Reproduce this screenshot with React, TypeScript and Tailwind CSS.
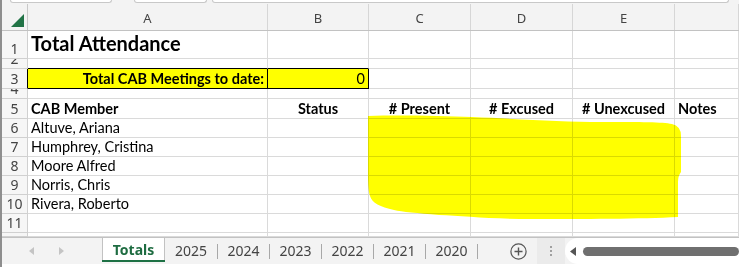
import React from 'react';

type CellSpec = { text?: string; cls?: string };

const COLS = ['w-[240px]', 'w-[101px]', 'w-[102px]', 'w-[102px]', 'w-[102px]', 'flex-1'];
const COL_LETTERS = ['A', 'B', 'C', 'D', 'E', ''];

const cellFont = "font-['Lato','Liberation_Sans',sans-serif] text-black";
const uiFont = "font-['Noto_Sans','Liberation_Sans',sans-serif]";

function SheetRow({
  num,
  h,
  cells,
  hdrCls
}: {
  num: string;
  h: string;
  cells?: (CellSpec | undefined)[];
  hdrCls?: string;
}) {
  return (
    <div className={`flex ${h}`}>
      <div
        className={`w-[26px] shrink-0 flex items-end justify-center overflow-hidden bg-[#f6f6f6] border-r border-b border-[#d0d0d0] text-[#444] text-[14px] leading-[16px] pb-[1px] ${uiFont} ${hdrCls ?? ''}`}
      >
        {num}
      </div>
      {COLS.map((w, i) => {
        const c = cells?.[i];
        return (
          <div
            key={i}
            className={`${w} shrink-0 flex items-end overflow-hidden whitespace-nowrap border-r border-b border-[#dadada] px-[3px] pb-[1px] text-[14.5px] leading-[17px] ${cellFont} ${c?.cls ?? ''}`}
          >
            {c?.text}
          </div>
        );
      })}
    </div>
  );
}

function Highlight() {
  return (
    <svg
      className="absolute left-0 top-0 pointer-events-none mix-blend-multiply"
      width="739"
      height="267"
      viewBox="0 0 739 267"
    >
      <path
        d="M366,116 C400,115 440,116 470,117 C520,119 560,122 600,122 C640,122 660,122 670,124 Q679,126 679,136 L679,172 Q676,176 676,182 L676,217 C640,219 580,219 530,219 C490,219 460,216 437,215 C415,213 400,212 392,210 C378,207 370,203 368,196 C366,190 366,180 366,170 Z"
        fill="#ffff00"
      />
    </svg>
  );
}

function TabBar() {
  const years = ['2025', '2024', '2023', '2022', '2021', '2020'];
  return (
    <div className={`flex h-[27px] border-t border-[#c2c2c2] bg-[#f3f3f3] ${uiFont}`}>
      <div className="w-[100px] shrink-0 flex items-center">
        <svg width="6" height="8" viewBox="0 0 6 8" className="ml-[27px]">
          <path d="M5,0 L0,4 L5,8 Z" fill="#c4c4c4" />
        </svg>
        <svg width="6" height="8" viewBox="0 0 6 8" className="ml-[23px]">
          <path d="M1,0 L6,4 L1,8 Z" fill="#c4c4c4" />
        </svg>
      </div>
      <div className="w-[63px] shrink-0 flex flex-col">
        <div className="h-[22px] bg-white border-x border-[#c2c2c2] flex items-center justify-center text-[14px] font-bold text-[#1e6c41]">
          Totals
        </div>
        <div className="h-[2px] bg-[#1e7145]" />
      </div>
      {years.map((y, i) => (
        <div
          key={y}
          className={`${i === 0 ? 'w-[53px]' : 'w-[52px]'} shrink-0 flex items-center`}
        >
          <span className="flex-1 text-center text-[14px] text-[#444] pb-[2px]">{y}</span>
          <span className="w-px h-[15px] bg-[#a8a8a8]" />
        </div>
      ))}
      <div className="w-[32px] shrink-0" />
      <div className="w-[17px] shrink-0 flex items-center">
        <svg width="17" height="17" viewBox="0 0 17 17">
          <circle cx="8.5" cy="8.5" r="7.6" fill="none" stroke="#555" strokeWidth="1.2" />
          <path d="M8.5,4.5 V12.5 M4.5,8.5 H12.5" stroke="#555" strokeWidth="1.4" />
        </svg>
      </div>
      <div className="w-[10px] shrink-0" />
      <div className="w-[28px] shrink-0 bg-[#ebebeb] flex flex-col items-center justify-center gap-[2px]">
        <span className="w-[2px] h-[2px] bg-[#a0a0a0]" />
        <span className="w-[2px] h-[2px] bg-[#a0a0a0]" />
        <span className="w-[2px] h-[2px] bg-[#a0a0a0]" />
      </div>
      <div className="flex-1 flex items-center bg-white rounded-l-full pl-[5px]">
        <svg width="7" height="9" viewBox="0 0 7 9">
          <path d="M6,0 L0,4.5 L6,9 Z" fill="#555" />
        </svg>
        <div className="flex-1 h-[9px] ml-[6px] rounded-full bg-[#6f6f6f]" />
      </div>
    </div>
  );
}

export default function App() {
  const bold = 'font-bold';
  const names = ['Altuve, Ariana', 'Humphrey, Cristina', 'Moore Alfred', 'Norris, Chris', 'Rivera, Roberto'];
  return (
    <div className="w-[739px] h-[267px] overflow-hidden bg-white border-l-2 border-[#8e8e8e] relative">
      {/* formula bar edges */}
      <div className="h-[4px] bg-[#f3f3f3] flex">
        <div className="ml-[8px] w-[102px] h-[3px] bg-white border-x border-b border-[#c8c8c8] rounded-b-[3px]" />
        <div className="ml-[22px] w-[73px] h-[3px] bg-white border-x border-b border-[#c8c8c8] rounded-b-[3px]" />
        <div className="ml-[5px] w-[517px] h-[3px] bg-white border-x border-b border-[#c8c8c8] rounded-b-[3px]" />
      </div>
      {/* column headers */}
      <div className={`flex h-[27px] bg-[#f3f3f3] border-b border-[#c2c2c2] text-[13px] text-[#444] ${uiFont}`}>
        <div className="w-[26px] shrink-0 border-r border-[#c8c8c8] flex items-end justify-end pr-[3px] pb-[3px]">
          <svg width="13" height="13" viewBox="0 0 13 13">
            <path d="M13,0 L13,13 L0,13 Z" fill="#217346" />
          </svg>
        </div>
        {COLS.map((w, i) => (
          <div
            key={i}
            className={`${w} shrink-0 border-r border-[#d6d6d6] flex items-center justify-center pt-[4px]`}
          >
            {COL_LETTERS[i]}
          </div>
        ))}
      </div>
      <SheetRow
        num="1"
        h="h-[28px]"
        cells={[{ text: 'Total Attendance', cls: 'text-[20px] font-bold leading-[24px] pb-[3px]' }]}
      />
      <SheetRow
        num="2"
        h="h-[10px]"
        cells={[{ cls: 'border-b-black' }, { cls: 'border-b-black' }]}
      />
      <SheetRow
        num="3"
        h="h-[20px]"
        hdrCls="border-r-black"
        cells={[
          { text: 'Total CAB Meetings to date:', cls: `justify-end bg-[#ffff00] border-r-black border-b-black ${bold}` },
          { text: '0', cls: 'justify-end bg-[#ffff00] border-r-black border-b-black' }
        ]}
      />
      <SheetRow num="4" h="h-[10px]" />
      <SheetRow
        num="5"
        h="h-[20px]"
        cells={[
          { text: 'CAB Member', cls: bold },
          { text: 'Status', cls: `justify-center ${bold}` },
          { text: '# Present', cls: `justify-center ${bold}` },
          { text: '# Excused', cls: `justify-center ${bold}` },
          { text: '# Unexcused', cls: `justify-center ${bold}` },
          { text: 'Notes', cls: bold }
        ]}
      />
      {names.map((n, i) => (
        <SheetRow key={n} num={String(6 + i)} h="h-[19px]" cells={[{ text: n }]} />
      ))}
      <SheetRow num="11" h="h-[19px]" />
      <SheetRow num="" h="h-[4px]" />
      <TabBar />
      <div className="h-[3px] bg-white" />
      <Highlight />
    </div>
  );
}
